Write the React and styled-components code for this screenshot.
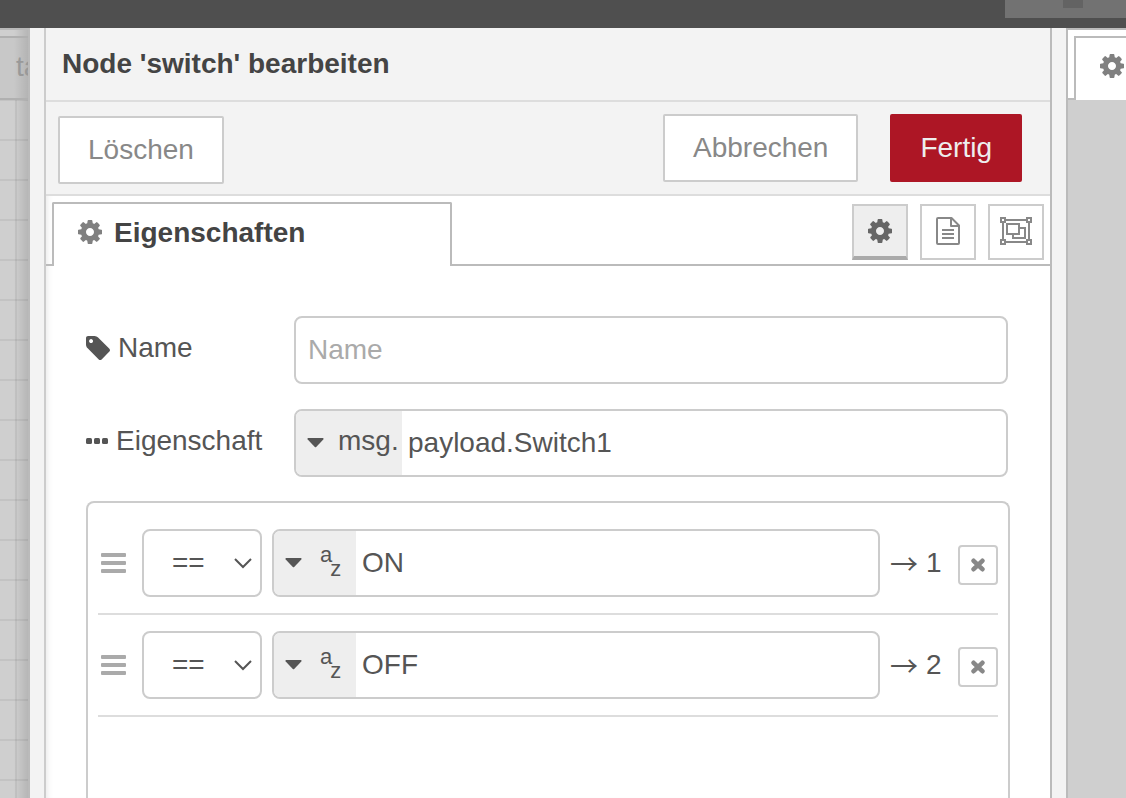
import React from 'react';
import styled, { createGlobalStyle, css } from 'styled-components';

const GlobalStyle = createGlobalStyle`
  *, *::before, *::after { box-sizing: border-box; }
  html, body, #root { height: 100%; }
  body {
    margin: 0;
    overflow: hidden;
    background: #fff;
    color: #555;
    font: 28px/40px "Liberation Sans", Arial, sans-serif;
  }
  button, input, select { font: inherit; color: inherit; margin: 0; }
  svg { display: block; flex: none; }
`;

const Page = styled.div`
  display: flex;
  flex-direction: column;
  height: 100vh;
`;

const TopBar = styled.header`
  display: flex;
  justify-content: flex-end;
  flex: none;
  height: 28px;
  background: #4f4f4f;
`;

const DeployButton = styled.div`
  width: 121px;
  height: 18px;
  padding-left: 58px;
  background: #727272;
`;

const DeployMark = styled.div`
  width: 20px;
  height: 8px;
  background: #636363;
`;

const Main = styled.main`
  display: flex;
  flex: 1;
  min-height: 0;
`;

const Workspace = styled.div`
  display: flex;
  flex-direction: column;
  flex: none;
  width: 30px;
  overflow: hidden;
  background: linear-gradient(to right, transparent 14px, rgba(0, 0, 0, 0.12) 28px) #cfcfcf;
  border-top: 2px solid #b8b8b8;
  border-right: 2px solid #bababa;
`;

const FlowTab = styled.div`
  flex: none;
  height: 64px;
  margin-top: 6px;
  padding: 9px 0 0 16px;
  border: solid #b0b0b0;
  border-width: 2px 0;
  background: linear-gradient(to right, transparent 14px, rgba(0, 0, 0, 0.1) 28px) #c8c8c8;
  color: #999;
`;

const Canvas = styled.div`
  flex: 1;
  background:
    linear-gradient(to right, transparent 15px, rgba(0, 0, 0, 0.06) 15px 17px, transparent 17px),
    repeating-linear-gradient(to bottom, rgba(0, 0, 0, 0.06) 0 1px, transparent 1px 39px, rgba(0, 0, 0, 0.06) 39px 40px);
`;

const TrayHandle = styled.div`
  flex: none;
  width: 16px;
  background: #f3f3f3;
  border-right: 2px solid #ccc;
`;

const Tray = styled.section`
  display: flex;
  flex-direction: column;
  flex: 1;
  min-width: 0;
  background: #fff;
  border-right: 2px solid #bbb;
  box-shadow: inset 6px 0 6px -5px rgba(0, 0, 0, 0.1);
`;

const TrayTitle = styled.h1`
  flex: none;
  height: 74px;
  margin: 0;
  padding: 16px;
  border-bottom: 2px solid #ddd;
  background: #f3f3f3;
  color: #444;
  font-size: 28px;
  line-height: 40px;
`;

const TrayToolbar = styled.div`
  display: flex;
  align-items: flex-start;
  flex: none;
  height: 94px;
  padding: 12px 28px 0 12px;
  border-bottom: 2px solid #ddd;
  background: #f3f3f3;
`;

const ActionGroup = styled.div`
  display: flex;
  gap: 32px;
  margin-left: auto;
`;

const Button = styled.button`
  height: 68px;
  padding: 0 28px;
  border: 2px solid #ccc;
  border-radius: 2px;
  background: #fff;
  color: #888;
  ${(p) => p.$low && css`margin-top: 2px;`}
  ${(p) => p.$primary && css`
    border-color: #ad1625;
    background: #ad1625;
    color: #eee;
  `}
`;

const TabBar = styled.div`
  display: flex;
  flex: none;
  height: 70px;
  padding: 6px 6px 0 0;
`;

const TabEdge = styled.div`
  width: ${(p) => p.$width || 'auto'};
  flex: ${(p) => (p.$width ? 'none' : 1)};
  border-bottom: 2px solid #bbb;
`;

const Tab = styled.button`
  display: flex;
  align-items: center;
  gap: 12px;
  width: 400px;
  padding: 0 24px 4px;
  border: 2px solid #bbb;
  border-bottom: 0;
  border-radius: 2px 2px 0 0;
  background: #fff;
  color: #444;
  font-weight: bold;
  svg { margin-bottom: 2px; color: #808080; }
`;

const TabTools = styled.div`
  display: flex;
  gap: 12px;
  margin-right: -6px;
  padding: 2px 6px 0 0;
  border-bottom: 2px solid #bbb;
`;

const ToolButton = styled.button`
  display: grid;
  place-items: center;
  width: 56px;
  height: 56px;
  padding: 0 0 2px;
  border: 2px solid #ccc;
  background: #fff;
  color: #888;
  ${(p) => p.$active && css`
    padding: 0;
    border-bottom: 4px solid #aaa;
    background: #eee;
    color: #666;
  `}
`;

const Form = styled.form`
  display: flex;
  flex-direction: column;
  gap: 24px;
  flex: 1;
  min-height: 0;
  padding: 50px 40px 0;
  overflow: hidden;
`;

const Fields = styled.div`
  display: flex;
  flex-direction: column;
  flex: none;
  gap: 25px;
`;

const FormRow = styled.div`
  display: flex;
  flex: none;
  align-items: center;
  padding-right: 2px;
`;

const Label = styled.label`
  display: flex;
  align-items: center;
  gap: 8px;
  flex: none;
  width: 208px;
  padding-bottom: 4px;
`;

const fieldBox = css`
  height: 68px;
  border: 2px solid #ccc;
  border-radius: 8px;
  background: #fff;
`;

const TextInput = styled.input`
  ${fieldBox}
  flex: 1;
  min-width: 0;
  padding: 0 12px;
  outline: 0;
  &::placeholder { color: #aaa; opacity: 1; }
`;

const TypedField = styled.div`
  ${fieldBox}
  display: flex;
  flex: 1;
  min-width: 0;
  overflow: hidden;
`;

const TypeButton = styled.button`
  display: flex;
  align-items: center;
  gap: 14px;
  flex: none;
  width: ${(p) => p.$width};
  padding: 0 0 0 11px;
  border: 0;
  background: #eee;
`;

const TypeName = styled.span`
  padding-bottom: 4px;
`;

const TypedInput = styled.input`
  flex: 1;
  min-width: 0;
  padding: 0 6px;
  border: 0;
  outline: 0;
  background: transparent;
`;

const StringGlyph = styled.span`
  display: flex;
  margin-left: 4px;
  font-size: 22px;
  line-height: 24px;
`;

const Raised = styled.span`
  padding-bottom: 16px;
`;

const Lowered = styled.span`
  margin-left: -2px;
  padding-top: 14px;
`;

const RuleList = styled.ol`
  flex: 1;
  margin: 0;
  padding: 10px;
  border: 2px solid #ccc;
  border-bottom: 0;
  border-radius: 8px 8px 0 0;
  list-style: none;
`;

const Rule = styled.li`
  display: flex;
  align-items: center;
  gap: 10px;
  height: 102px;
  border-bottom: 2px solid #ddd;
`;

const Handle = styled.span`
  width: 34px;
  padding-left: 3px;
  color: #aaa;
`;

const SelectBox = styled.span`
  display: grid;
  align-items: center;
  flex: none;
  width: 120px;
  > * { grid-area: 1 / 1; }
  > svg { justify-self: end; margin-right: 10px; pointer-events: none; }
`;

const Select = styled.select`
  ${fieldBox}
  width: 100%;
  padding: 0 28px;
  appearance: none;
  outline: 0;
`;

const Output = styled.span`
  display: flex;
  gap: 8px;
  width: 58px;
  white-space: nowrap;
`;

const Arrow = styled.span`
  width: 28px;
  font-family: "Noto Sans CJK JP", sans-serif;
`;

const RemoveButton = styled.button`
  display: grid;
  place-items: center;
  flex: none;
  width: 40px;
  height: 40px;
  margin-top: 4px;
  padding: 0;
  border: 2px solid #ccc;
  border-radius: 4px;
  background: #fff;
  color: #888;
`;

const Separator = styled.div`
  flex: none;
  width: 14px;
  background: #f3f3f3;
`;

const Sidebar = styled.aside`
  display: flex;
  flex-direction: column;
  flex: none;
  width: 60px;
  border: solid #bbb;
  border-width: 2px 0 0 2px;
  background: #cfcfcf;
`;

const SidebarTabs = styled.div`
  display: flex;
  flex: none;
  height: 70px;
  padding-top: 6px;
  background: #fff;
`;

const SidebarTab = styled.button`
  flex: 1;
  padding: 0 0 6px 24px;
  border: solid #bbb;
  border-width: 2px 0 0 2px;
  background: #fff;
  color: #808080;
`;

const CogIcon = () => (
  <svg width="24" height="24" viewBox="0 -128 1536 1536" fill="currentColor" aria-hidden="true">
    <path d="M1024 640q0-106-75-181t-181-75-181 75-75 181 75 181 181 75 181-75 75-181zm512-109v222q0 12-8 23t-20 13l-185 28q-19 54-39 91 35 50 107 138 10 12 10 25t-9 23q-27 37-99 108t-94 71q-12 0-26-9l-138-108q-44 23-91 38-16 136-29 186-7 28-36 28h-222q-14 0-24.500-8.500t-11.500-21.500l-28-184q-49-16-90-37l-141 107q-10 9-25 9-14 0-25-11-126-114-165-168-7-10-7-23 0-12 8-23 15-21 51-66.500t54-70.500q-27-50-41-99l-183-27q-13-2-21-12.500t-8-23.500v-222q0-12 8-23t19-13l186-28q14-46 39-92-40-57-107-138-10-12-10-24 0-10 9-23 26-36 98.500-107.500t94.500-71.500q13 0 26 10l138 107q44-23 91-38 16-136 29-186 7-28 36-28h222q14 0 24.500 8.500t11.500 21.500l28 184q49 16 90 37l142-107q9-9 24-9 13 0 25 10 129 119 165 170 7 8 7 22 0 12-8 23-15 21-51 66.500t-54 70.500q26 50 41 98l183 28q13 2 21 12.500t8 23.500z" />
  </svg>
);

const TagIcon = () => (
  <svg width="24" height="24" viewBox="0 128 1516 1516" fill="currentColor" aria-hidden="true">
    <path d="M448 448q0-53-37.500-90.500t-90.500-37.500-90.500 37.500-37.500 90.500 37.500 90.500 90.500 37.500 90.500-37.500 37.500-90.500zm1067 576q0 53-37 90l-491 492q-39 37-91 37-53 0-90-37l-715-716q-38-37-64.500-101t-26.500-117v-416q0-52 38-90t90-38h416q53 0 117 26.500t102 64.500l715 714q37 39 37 91z" />
  </svg>
);

const EllipsisIcon = () => (
  <svg width="22" height="6" viewBox="0 0 22 6" fill="currentColor" aria-hidden="true">
    <rect width="6" height="6" rx="1.500" />
    <rect x="8" width="6" height="6" rx="1.500" />
    <rect x="16" width="6" height="6" rx="1.500" />
  </svg>
);

const FileIcon = () => (
  <svg width="24" height="28" viewBox="0 0 24 28" fill="none" stroke="currentColor" strokeWidth="2" strokeLinejoin="round" aria-hidden="true">
    <path d="M2 1h13.500L23 8.500V26q0 1-1 1H2q-1 0-1-1V2q0-1 1-1z" />
    <path d="M15 1v8h8" />
    <path d="M6 13h12M6 17h12M6 21h12" />
  </svg>
);

const GroupIcon = () => (
  <svg width="32" height="28" viewBox="0 0 32 28" fill="none" stroke="currentColor" strokeWidth="2" aria-hidden="true">
    <path d="M6 3h20M6 25h20M3 6v16M29 6v16" />
    <path d="M1 1h4v4H1zM27 1h4v4h-4zM1 23h4v4H1zM27 23h4v4h-4z" />
    <path d="M7 7h12v10H7z" />
    <path d="M20 11h5v10H13v-3" />
  </svg>
);

const CaretIcon = () => (
  <svg width="17" height="10" viewBox="0 0 17 10" fill="currentColor" aria-hidden="true">
    <path d="M1 0h15q1 .5.300 1.400L9.200 9q-.7.700-1.400 0L.7 1.400Q0 .5 1 0z" />
  </svg>
);

const ChevronIcon = () => (
  <svg width="18" height="11" viewBox="0 0 18 11" fill="none" stroke="currentColor" strokeWidth="2" aria-hidden="true">
    <path d="M1 1l8 8 8-8" />
  </svg>
);

const BarsIcon = () => (
  <svg width="25" height="20" viewBox="0 0 25 20" fill="currentColor" aria-hidden="true">
    <rect width="25" height="4" rx="1" />
    <rect y="8" width="25" height="4" rx="1" />
    <rect y="16" width="25" height="4" rx="1" />
  </svg>
);

const CrossIcon = () => (
  <svg width="14" height="14" viewBox="0 0 14 14" fill="none" stroke="currentColor" strokeWidth="4.600" strokeLinecap="round" aria-hidden="true">
    <path d="M2.600 2.800l8.800 8.400M11.400 2.800l-8.800 8.400" />
  </svg>
);

const rules = [
  { value: 'ON', output: 1 },
  { value: 'OFF', output: 2 },
];

function RuleRow({ value, output }) {
  return (
    <Rule>
      <Handle><BarsIcon /></Handle>
      <SelectBox>
        <Select aria-label={`Operator ${output}`} defaultValue="eq">
          <option value="eq">==</option>
        </Select>
        <ChevronIcon />
      </SelectBox>
      <TypedField>
        <TypeButton type="button" $width="82px">
          <CaretIcon />
          <StringGlyph>
            <Raised>a</Raised>
            <Lowered>z</Lowered>
          </StringGlyph>
        </TypeButton>
        <TypedInput aria-label={`Wert ${output}`} defaultValue={value} />
      </TypedField>
      <Output><Arrow>→</Arrow>{output}</Output>
      <RemoveButton type="button" aria-label="Entfernen"><CrossIcon /></RemoveButton>
    </Rule>
  );
}

export default function App() {
  return (
    <Page>
      <GlobalStyle />
      <TopBar>
        <DeployButton><DeployMark /></DeployButton>
      </TopBar>
      <Main>
        <Workspace>
          <FlowTab>ta</FlowTab>
          <Canvas />
        </Workspace>
        <TrayHandle />
        <Tray>
          <TrayTitle>Node 'switch' bearbeiten</TrayTitle>
          <TrayToolbar>
            <Button type="button" $low>Löschen</Button>
            <ActionGroup>
              <Button type="button">Abbrechen</Button>
              <Button type="button" $primary>Fertig</Button>
            </ActionGroup>
          </TrayToolbar>
          <TabBar>
            <TabEdge $width="6px" />
            <Tab type="button"><CogIcon />Eigenschaften</Tab>
            <TabEdge />
            <TabTools>
              <ToolButton type="button" $active aria-label="Eigenschaften"><CogIcon /></ToolButton>
              <ToolButton type="button" aria-label="Beschreibung"><FileIcon /></ToolButton>
              <ToolButton type="button" aria-label="Darstellung"><GroupIcon /></ToolButton>
            </TabTools>
          </TabBar>
          <Form>
            <Fields>
              <FormRow>
                <Label htmlFor="node-name"><TagIcon />Name</Label>
                <TextInput id="node-name" placeholder="Name" />
              </FormRow>
              <FormRow>
                <Label htmlFor="node-property"><EllipsisIcon />Eigenschaft</Label>
                <TypedField>
                  <TypeButton type="button" $width="106px">
                    <CaretIcon />
                    <TypeName>msg.</TypeName>
                  </TypeButton>
                  <TypedInput id="node-property" defaultValue="payload.Switch1" />
                </TypedField>
              </FormRow>
            </Fields>
            <RuleList>
              {rules.map((rule) => <RuleRow key={rule.output} {...rule} />)}
            </RuleList>
          </Form>
        </Tray>
        <Separator />
        <Sidebar>
          <SidebarTabs>
            <TabEdge $width="6px" />
            <SidebarTab type="button" aria-label="Konfiguration"><CogIcon /></SidebarTab>
          </SidebarTabs>
        </Sidebar>
      </Main>
    </Page>
  );
}
